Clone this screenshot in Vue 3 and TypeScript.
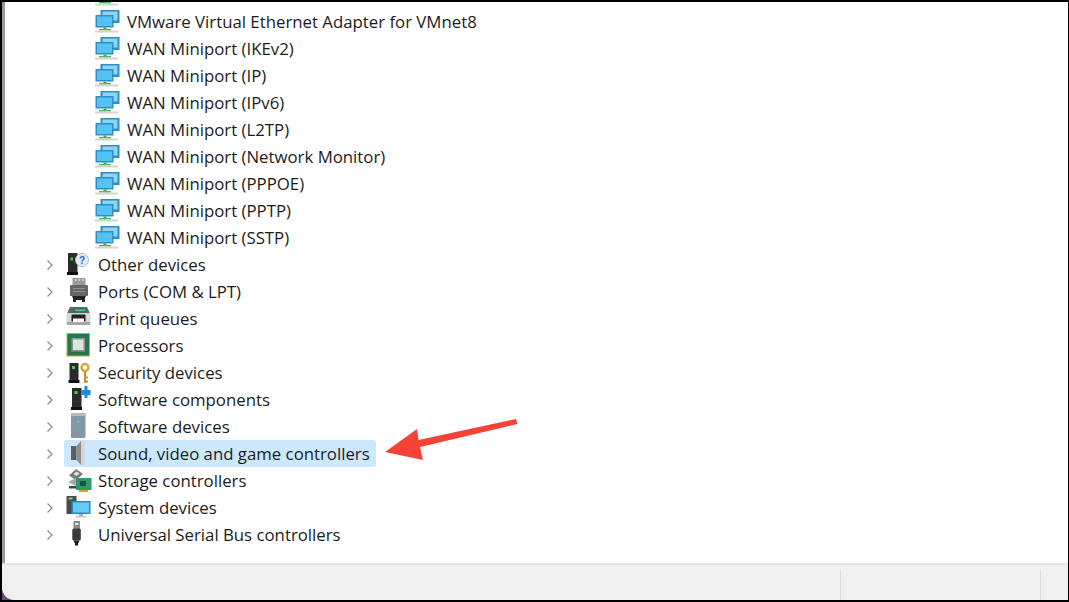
<script setup lang="ts">
type Row = { label: string; icon: string; child?: boolean; selected?: boolean };
const children = [
  "",
  "VMware Virtual Ethernet Adapter for VMnet8",
  "WAN Miniport (IKEv2)",
  "WAN Miniport (IP)",
  "WAN Miniport (IPv6)",
  "WAN Miniport (L2TP)",
  "WAN Miniport (Network Monitor)",
  "WAN Miniport (PPPOE)",
  "WAN Miniport (PPTP)",
  "WAN Miniport (SSTP)",
];
const rows: Row[] = [
  ...children.map((label) => ({ label, icon: "net", child: true })),
  { label: "Other devices", icon: "other" },
  { label: "Ports (COM & LPT)", icon: "port" },
  { label: "Print queues", icon: "print" },
  { label: "Processors", icon: "cpu" },
  { label: "Security devices", icon: "sec" },
  { label: "Software components", icon: "comp" },
  { label: "Software devices", icon: "soft" },
  { label: "Sound, video and game controllers", icon: "sound", selected: true },
  { label: "Storage controllers", icon: "storage" },
  { label: "System devices", icon: "system" },
  { label: "Universal Serial Bus controllers", icon: "usb" },
];
</script>

<template>
  <div class="window">
    <div class="list">
      <div v-for="(r, i) in rows" :key="i" class="row" :class="{ child: r.child }">
        <svg v-if="!r.child" class="chev" width="8" height="12" viewBox="0 0 8 12">
          <path d="M1.500 1.500 6 6 1.500 10.500" fill="none" stroke="#8a8a8a" stroke-width="1.200" />
        </svg>
        <div class="node" :class="{ selected: r.selected }">
          <svg class="icon" width="24" height="24" viewBox="0 0 24 24">
            <template v-if="r.icon === 'net'">
              <rect x="5.500" y="0" width="19" height="13" fill="#2f8fc4" />
              <rect x="7.500" y="1.500" width="15" height="9" fill="#8fd4f4" />
              <rect x="0.500" y="5" width="18" height="12.500" fill="#2f8fc4" />
              <rect x="2" y="6.500" width="15" height="9.500" fill="#55c3f2" />
              <rect x="8.500" y="17.500" width="3" height="2" fill="#3fa94a" />
              <rect x="4" y="19" width="12" height="1.500" fill="#4fb858" />
              <rect x="0" y="20.500" width="23" height="2" fill="#d4d4d4" />
            </template>
            <template v-else-if="r.icon === 'other'">
              <rect x="2" y="0" width="9.500" height="19" fill="#2b2b2b" />
              <rect x="4.500" y="4.500" width="2.500" height="3" fill="#39d353" />
              <rect x="1" y="19" width="11" height="3" fill="#111" />
              <circle cx="16" cy="7" r="6.500" fill="#e3ecf6" stroke="#a9b8c8" />
              <text x="16" y="11" text-anchor="middle" class="q">?</text>
            </template>
            <template v-else-if="r.icon === 'port'">
              <rect x="6.500" y="-2" width="13" height="8" fill="#9a9a9a" />
              <path d="M9 0h1.500M12.500 0H14M16 0h1.500" stroke="#f0f0f0" stroke-width="1.500" />
              <rect x="4" y="5" width="18" height="11" rx="1" fill="#666" />
              <path d="M7 8.500h12M7 11.500h12" stroke="#8f8f8f" />
              <path d="M6 16h14l-1 2v4h-3v-2h-6v2H7v-4z" fill="#232323" />
            </template>
            <template v-else-if="r.icon === 'print'">
              <path d="M4 0h17l3 6.500H1z" fill="#566568" />
              <rect x="9" y="2.500" width="10" height="1.500" fill="#2fd3a8" />
              <rect x="0.500" y="6" width="24" height="12" rx="1" fill="#d6d6d6" />
              <rect x="5.500" y="7.500" width="14" height="7" fill="#232323" />
              <rect x="7" y="11.500" width="11" height="3.500" fill="#fff" />
              <rect x="1" y="15" width="23" height="3" fill="#a6a6a6" />
            </template>
            <template v-else-if="r.icon === 'cpu'">
              <rect x="0.500" y="-1" width="23.500" height="23.500" fill="#c9a650" />
              <rect x="1.500" y="0" width="21.500" height="21.500" fill="#23774c" />
              <rect x="5.500" y="4" width="13.500" height="13.500" fill="#8b948f" />
              <rect x="7" y="5.500" width="10.500" height="10.500" fill="#dfe3e0" />
            </template>
            <template v-else-if="r.icon === 'sec'">
              <rect x="3.500" y="2" width="9" height="17" fill="#2b2b2b" />
              <rect x="6" y="5" width="3" height="3" fill="#39d353" />
              <rect x="2.500" y="19" width="11" height="3" fill="#111" />
              <circle cx="19" cy="6.500" r="3.500" fill="none" stroke="#d9a441" stroke-width="2.500" />
              <path d="M19 10v12M19 16.500h3M19 20.500h3" stroke="#c99232" stroke-width="2.200" />
            </template>
            <template v-else-if="r.icon === 'comp'">
              <rect x="6" y="0" width="9.500" height="19" fill="#2b2b2b" />
              <rect x="8.500" y="3" width="3" height="3" fill="#39d353" />
              <rect x="5" y="19" width="11" height="3" fill="#111" />
              <path d="M15.500 2h3v-4h3v4h3v5h-3v3h-3V7h-3z" fill="#1e88e5" />
            </template>
            <template v-else-if="r.icon === 'soft'">
              <rect x="5" y="-2" width="14.500" height="25" rx="1" fill="#8796a5" />
              <rect x="5" y="-2" width="14.500" height="3" fill="#b5bdc6" />
              <rect x="11" y="5.500" width="2.500" height="2.500" fill="#35d0e0" />
            </template>
            <template v-else-if="r.icon === 'sound'">
              <rect x="5" y="4" width="5.500" height="14" fill="#5f5f5f" />
              <path d="M10.500 4 15 -1v24l-4.500-5z" fill="#8f8f8f" />
              <path d="M15 -1h3.500v24H15z" fill="#d4d4d4" />
            </template>
            <template v-else-if="r.icon === 'storage'">
              <path d="M3 6.500 10 0l7 5-7 6z" fill="#7a7a7a" />
              <path d="M7.500 5l3-2.500 3 2-3 2.500z" fill="#e4e4e4" />
              <path d="M2 13l8-4v8z" fill="#a8a8a8" />
              <rect x="10" y="9" width="15.500" height="12" fill="#2d9a68" />
              <rect x="14" y="12" width="6" height="5" fill="#12583a" />
              <rect x="13" y="21" width="9" height="2" fill="#e8a020" />
              <rect x="3" y="17" width="7" height="2.500" fill="#444" />
            </template>
            <template v-else-if="r.icon === 'system'">
              <rect x="0.500" y="0" width="10" height="18" fill="#4b4b4b" />
              <rect x="2.500" y="1.500" width="4" height="2" fill="#7fd47f" />
              <rect x="5.500" y="5" width="19" height="13" fill="#1c8fc9" />
              <rect x="7" y="6.500" width="16" height="10" fill="#68c9f2" />
              <rect x="13" y="18" width="4" height="2" fill="#aaa" />
              <rect x="10" y="20" width="10" height="1.500" fill="#c8c8c8" />
            </template>
            <template v-else-if="r.icon === 'usb'">
              <rect x="7.500" y="-2" width="6.500" height="8" fill="#8a8a8a" />
              <rect x="9" y="0" width="3.500" height="2" fill="#e0e0e0" />
              <rect x="6.300" y="5.500" width="8.500" height="12" rx="1.500" fill="#3a3a3a" />
              <path d="M7.500 17.500h6l-1 2.500h-4z" fill="#1f1f1f" />
              <rect x="9" y="20" width="3" height="2.500" fill="#111" />
            </template>
          </svg>
          <span v-if="r.label" class="label">{{ r.label }}</span>
        </div>
      </div>
    </div>
    <div class="status">
      <div class="cell main"></div>
      <div class="cell mid"></div>
      <div class="cell end"></div>
    </div>
    <svg class="arrow" width="136" height="42" viewBox="0 0 136 42">
      <path d="M1 33 33 10l1.500 11L132 0l1.500 5L36 28l3 13z" fill="#f44336" />
    </svg>
    <svg class="corner" width="11" height="11" viewBox="0 0 11 11">
      <path d="M0 0v11h11C5 10 1 6 0 0z" fill="#6b4a86" />
    </svg>
  </div>
</template>

<style>
html, body { margin: 0; background: #000; }
</style>

<style scoped>
.window {
  position: relative;
  width: 1069px;
  height: 602px;
  box-sizing: border-box;
  padding: 2px 1px 2px 2px;
  background: #000;
  display: flex;
  flex-direction: column;
  overflow: hidden;
  font-family: "Open Sans", "Noto Sans", sans-serif;
}
.list {
  flex: 1;
  min-height: 0;
  background: #fff;
  border-left: 3px solid #9a9a9a;
  overflow: hidden;
  display: flex;
  flex-direction: column;
  justify-content: flex-end;
  padding-bottom: 15px;
}
.row {
  flex: none;
  height: 27px;
  display: flex;
  align-items: center;
  padding-left: 41px;
}
.row.child { padding-left: 88px; }
.chev { width: 8px; margin-right: 10px; flex: none; }
.node {
  height: 27px;
  display: flex;
  align-items: center;
  gap: 8px;
  padding: 0 6px 0 2px;
  border-radius: 2px;
}
.node.selected { background: #cce8ff; }
.icon { flex: none; overflow: visible; }
.label { font-size: 16.8px; color: #1b1b1b; white-space: nowrap; }
.q { font: bold 10px "Liberation Sans", sans-serif; fill: #2a6fc0; }
.status {
  flex: none;
  height: 35px;
  background: #f0f0f0;
  border-top: 2px solid #e6e6e6;
  display: flex;
}
.cell { margin-top: 4px; }
.main { flex: 1; }
.mid { width: 199px; border-left: 1px solid #dcdcdc; }
.end { width: 27px; border-left: 1px solid #dcdcdc; }
.arrow { position: absolute; left: 384px; top: 419px; }
.corner { position: absolute; left: 2px; bottom: 2px; }
</style>
